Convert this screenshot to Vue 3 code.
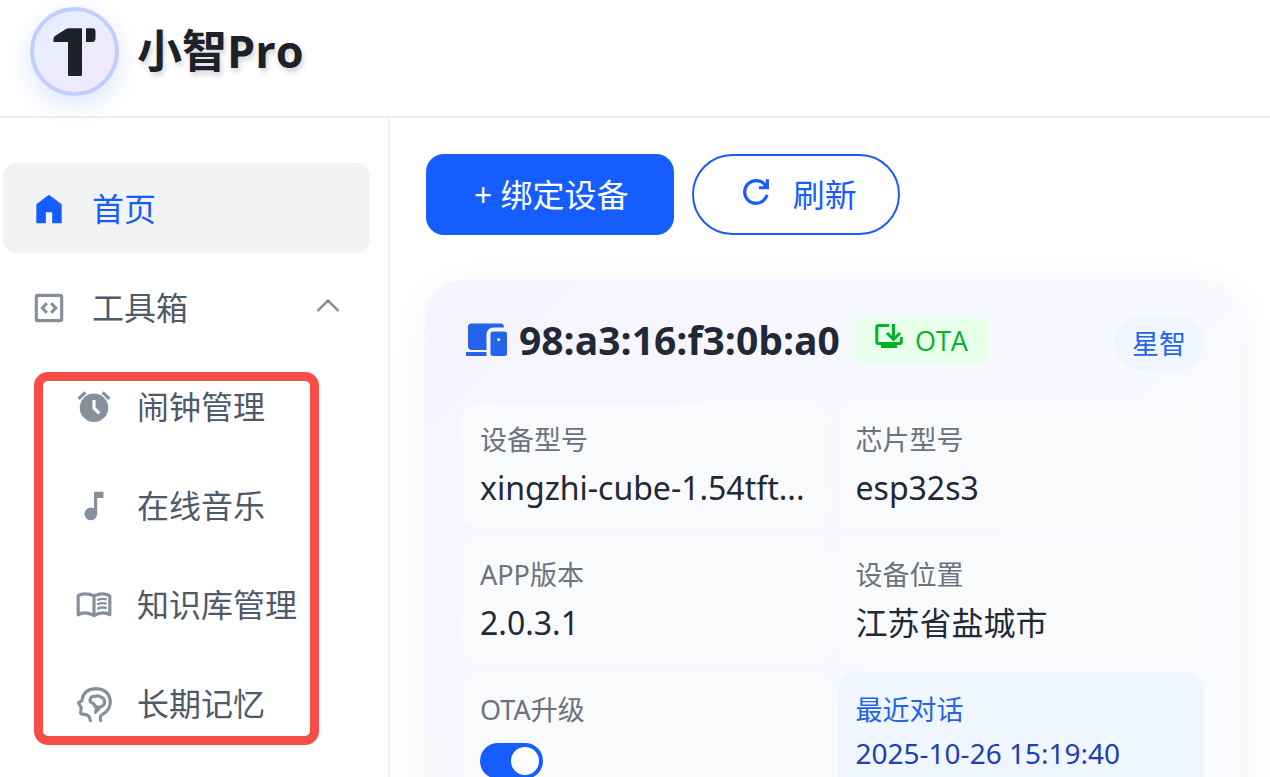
<script setup>
import { ref } from 'vue'

const tools = [
  { key: 'alarm', label: '闹钟管理' },
  { key: 'music', label: '在线音乐' },
  { key: 'book', label: '知识库管理' },
  { key: 'memory', label: '长期记忆' },
]
const fields = [
  { label: '设备型号', value: 'xingzhi-cube-1.54tft...' },
  { label: '芯片型号', value: 'esp32s3' },
  { label: 'APP版本', value: '2.0.3.1' },
  { label: '设备位置', value: '江苏省盐城市' },
]
const autoUpgrade = ref(true)
const open = ref(true)
</script>

<template>
  <div class="page">
    <header class="topbar">
      <div class="logo">
        <svg viewBox="0 0 81 81" aria-hidden="true">
          <path d="M19.500 31V27.500Q19.500 26 21 25L32 18Q33.500 17.300 35 17.300H48V63.500Q48 65 46.500 65H35.500Q34 65 34 63.500V31Z" />
          <path d="M52 17.300H58.500Q61.500 17.300 61.500 20.300V27Q61.500 31 58 31H52Z" />
        </svg>
      </div>
      <h1>小智Pro</h1>
    </header>

    <div class="body">
      <nav class="sidebar">
        <a class="item active" href="#home">
          <svg class="icon" viewBox="0 0 24 24"><path fill="currentColor" d="M4 21V9l8-6 8 6v12h-6v-7h-4v7z" /></svg>
          <span>首页</span>
        </a>
        <button class="item" type="button" :aria-expanded="open" @click="open = !open">
          <svg class="icon" viewBox="0 0 24 24" fill="none" stroke="currentColor" stroke-width="2">
            <rect x="4" y="4" width="16" height="16" rx="1" />
            <path d="M10.600 9 7.800 12l2.800 3M13.400 9l2.800 3-2.800 3" />
          </svg>
          <span>工具箱</span>
          <svg class="chevron" viewBox="0 0 24 24" fill="none" stroke="currentColor" stroke-width="2.500"><path d="M1.500 17 12 6.500 22.500 17" /></svg>
        </button>
        <div v-if="open" class="sub">
          <a v-for="t in tools" :key="t.key" class="item" :href="'#' + t.key">
            <svg v-if="t.key === 'alarm'" class="icon" viewBox="0 0 24 24">
              <circle cx="12" cy="12.500" r="9" fill="currentColor" />
              <path d="M2.300 6.800 6.600 2.700M21.700 6.800 17.400 2.700" fill="none" stroke="currentColor" stroke-width="2" />
              <path d="M12 7.500v5.200l3.400 3.400" fill="none" stroke="#fff" stroke-width="2" />
            </svg>
            <svg v-else-if="t.key === 'music'" class="icon" viewBox="0 0 24 24">
              <path fill="currentColor" d="M10 21q-1.650 0-2.825-1.175T6 17t1.175-2.825T10 13q.575 0 1.063.138t.937.412V3h6v4h-4v10q0 1.650-1.175 2.825T10 21" />
            </svg>
            <svg v-else-if="t.key === 'book'" class="icon" viewBox="0 0 24 24" fill="none" stroke="currentColor" stroke-width="2" stroke-linejoin="round">
              <path d="M12 6.200Q9.500 5 6.500 5T2 6.200V18.200Q4 17 6.500 17T12 18.800Q14.500 17 17.500 17T22 18.200V6.200Q20 5 17.500 5T12 6.200V18.800" />
              <path stroke-width="1.500" stroke-linejoin="miter" d="M14 9Q17 7.600 20 8.500M14 11.700Q17 10.300 20 11.200M14 14.400Q17 13 20 13.900" />
            </svg>
            <svg v-else class="icon" viewBox="0 0 24 24" fill="none" stroke="currentColor" stroke-width="2" stroke-linecap="round" stroke-linejoin="round">
              <path d="M9.700 22.500Q9.300 19 6.800 18.700L4.600 18.400Q3.300 18.100 3.600 16.600L4 14.300 2.200 11.200 4.300 10Q5.200 2.500 13.300 2.300 22 2.800 22.300 11 22 16 17.600 18.400 15.200 19.700 16.300 22.500" />
              <path stroke-width="2" d="M13 17.200 14 13.700H12.700Q12.300 11.500 10.500 11.200 9 10.300 9.700 8.600 10.600 7 12.500 7.200 15 6.300 16.600 7.800 18.300 8 18.700 10.300 19 12.300 17.200 13.300 15.400 14 14.800 15.200L13 17.200" />
            </svg>
            <span>{{ t.label }}</span>
          </a>
          <div class="highlight"></div>
        </div>
      </nav>

      <main class="content">
        <div class="actions">
          <button class="bind" type="button">+ 绑定设备</button>
          <button class="refresh" type="button">
            <svg viewBox="0 0 48 48" fill="none" stroke="currentColor" stroke-width="4.500"><path d="M38.837 18C36.463 12.136 30.715 8 24 8 15.163 8 8 15.163 8 24s7.163 16 16 16c7.455 0 13.720-5.100 15.496-12M40 6v12H28" /></svg>
            <span>刷新</span>
          </button>
        </div>

        <section class="card">
          <div class="card-head">
            <div class="identity">
              <svg class="device" viewBox="0 0 45 45" fill="currentColor" aria-hidden="true">
                <path d="M6 9Q6 5.500 9.500 5.500H38.500Q42 5.500 42 9.500H32Q24.500 9.500 24.500 17V32H10Q6 32 6 28ZM4 34H24.500V38H4Z" />
                <path fill-rule="evenodd" d="M31 13.500H42.500Q45 13.500 45 16V35.500Q45 38 42.500 38H31Q28.500 38 28.500 35.500V16Q28.500 13.500 31 13.500ZM36.700 20A1.600 1.600 0 1 0 36.700 23.200 1.600 1.600 0 1 0 36.700 20Z" />
              </svg>
              <h2>98:a3:16:f3:0b:a0</h2>
              <span class="ota">
                <svg viewBox="0 0 30 30" fill="none" stroke="currentColor" stroke-width="3" aria-hidden="true">
                  <path d="M15 4.500H4.500Q2.800 4.500 2.800 6.200V20.500Q2.800 22.500 4.500 22.500H25.500Q27.300 22.500 27.300 20.500V16" />
                  <path d="M19.500 3V17.500M13 12l6.500 6.500L26 12" />
                  <path fill="currentColor" stroke="none" d="M3 21H27V24H23V27H7V24H3Z" />
                </svg>
                OTA
              </span>
            </div>
            <span class="brand">星智</span>
          </div>

          <div class="grid">
            <div v-for="f in fields" :key="f.label" class="cell">
              <div class="label">{{ f.label }}</div>
              <div class="value">{{ f.value }}</div>
            </div>
            <div class="cell">
              <label class="label" for="ota-switch">OTA升级</label>
              <input id="ota-switch" v-model="autoUpgrade" class="switch" type="checkbox" role="switch" />
            </div>
            <div class="cell recent">
              <div class="label">最近对话</div>
              <div class="date">2025-10-26 15:19:40</div>
            </div>
          </div>
        </section>
      </main>
    </div>
  </div>
</template>

<style>
body {
  margin: 0;
  background: #fff;
}
</style>

<style scoped>
* {
  box-sizing: border-box;
}
.page {
  height: 100vh;
  display: flex;
  flex-direction: column;
  overflow: hidden;
  background: #fff;
  color: #1d2129;
  font-family: "Open Sans", "Noto Sans CJK SC", sans-serif;
  font-size: 32px;
}
button {
  font: inherit;
  cursor: pointer;
}
svg {
  display: block;
  flex: none;
}
.topbar {
  flex: none;
  height: 118px;
  display: flex;
  align-items: center;
  gap: 18px;
  padding: 0 30px 14px;
  border-bottom: 2px solid #f0f0f0;
}
.logo {
  width: 89px;
  height: 89px;
  border: 4px solid #bfcfff;
  border-radius: 50%;
  background: linear-gradient(135deg, #e6effe, #f1e8fa);
  box-shadow: 0 9px 27px rgba(22, 93, 255, 0.15);
}
.logo svg {
  width: 100%;
  fill: #1d2129;
}
h1 {
  margin: 0;
  font-size: 45px;
  line-height: 60px;
  font-weight: 700;
  text-shadow: 2px 4px 5px rgba(0, 0, 0, 0.16);
}
.body {
  flex: 1;
  min-height: 0;
  display: flex;
}
.sidebar {
  flex: none;
  width: 390px;
  padding: 45px 18px 0 3px;
  border-right: 2px solid #f0f0f0;
}
.item {
  width: 100%;
  height: 90px;
  margin: 0 0 9px;
  padding: 0 27px;
  display: flex;
  align-items: center;
  gap: 24px;
  border: 0;
  border-radius: 14px;
  background: none;
  color: #4e5969;
  text-decoration: none;
  white-space: nowrap;
}
.item span {
  padding-bottom: 3px;
}
.item.active {
  background: #f2f3f5;
  color: #165dff;
}
.icon {
  width: 38px;
  height: 38px;
  margin-top: 2px;
  color: #86909c;
}
.active .icon {
  color: #165dff;
}
.chevron {
  width: 24px;
  height: 24px;
  margin: 0 3px 3px auto;
  color: #86909c;
}
.sub {
  position: relative;
}
.sub .item {
  padding-left: 72px;
}
.highlight {
  position: absolute;
  top: 11px;
  left: 31px;
  right: 51px;
  bottom: 3px;
  border: 9px solid #f74c48;
  border-radius: 14px;
  pointer-events: none;
}
.content {
  flex: 1;
  min-width: 0;
  padding: 36px 30px 0 36px;
}
.actions {
  display: flex;
  gap: 18px;
  margin-bottom: 45px;
}
.actions button {
  height: 81px;
  display: flex;
  align-items: center;
  justify-content: center;
}
.actions .bind {
  padding: 0 45px 4px 48px;
  border: 0;
  border-radius: 18px;
  background: #165dff;
  color: #fff;
}
.actions .refresh {
  gap: 20px;
  padding: 0 41px 4px 45px;
  border: 2px solid #165dff;
  border-radius: 41px;
  background: #fff;
  color: #165dff;
}
.refresh svg {
  width: 34px;
  height: 34px;
  margin-bottom: 2px;
}
.card {
  height: 620px;
  padding: 36px;
  border-radius: 36px;
  background: linear-gradient(135deg, #f7f3fe 0%, #f7f9fe 50%, #fafbff 100%);
  box-shadow: 0 9px 45px rgba(0, 0, 0, 0.06);
}
.card-head {
  display: flex;
  align-items: flex-start;
  justify-content: space-between;
  margin-bottom: 32px;
}
.identity {
  height: 48px;
  display: flex;
  align-items: center;
}
.device {
  width: 45px;
  height: 45px;
  color: #2563eb;
}
h2 {
  margin: 0 14px 0 12px;
  font-size: 39px;
  line-height: 48px;
  font-weight: 700;
  color: #1f2937;
}
.ota {
  height: 45px;
  padding: 0 20px;
  display: flex;
  align-items: center;
  gap: 11px;
  border-radius: 5px;
  background: #e8ffea;
  color: #00b42a;
  font-size: 27px;
}
.ota svg {
  width: 30px;
  height: 30px;
  margin-bottom: 8px;
}
.brand {
  padding: 2px 18px 0;
  border-radius: 27px;
  background: #eff6ff;
  color: #2563eb;
  font-size: 27px;
  line-height: 52px;
}
.grid {
  display: grid;
  grid-template-columns: repeat(2, minmax(0, 1fr));
  gap: 9px;
  font-family: "Noto Sans", "Noto Sans CJK SC", sans-serif;
}
.cell {
  min-height: 126px;
  padding: 18px;
  border-radius: 18px;
  background: #f9fafb;
}
.label {
  display: block;
  margin-bottom: 5px;
  font-size: 27px;
  line-height: 40px;
  color: #6b7280;
}
.value {
  line-height: 45px;
  color: #1f2937;
  white-space: nowrap;
}
.recent {
  background: #eff6ff;
}
.recent .label {
  color: #2563eb;
}
.date {
  font-size: 28px;
  line-height: 36px;
  color: #1e40af;
}
.switch {
  appearance: none;
  display: block;
  width: 63px;
  height: 36px;
  margin: 13px 0 0;
  padding: 4px;
  border-radius: 18px;
  background: #c9cdd4;
  cursor: pointer;
}
.switch::before {
  content: "";
  display: block;
  width: 28px;
  height: 28px;
  border-radius: 50%;
  background: #fff;
}
.switch:checked {
  background: #165dff;
}
.switch:checked::before {
  margin-left: auto;
}
</style>
